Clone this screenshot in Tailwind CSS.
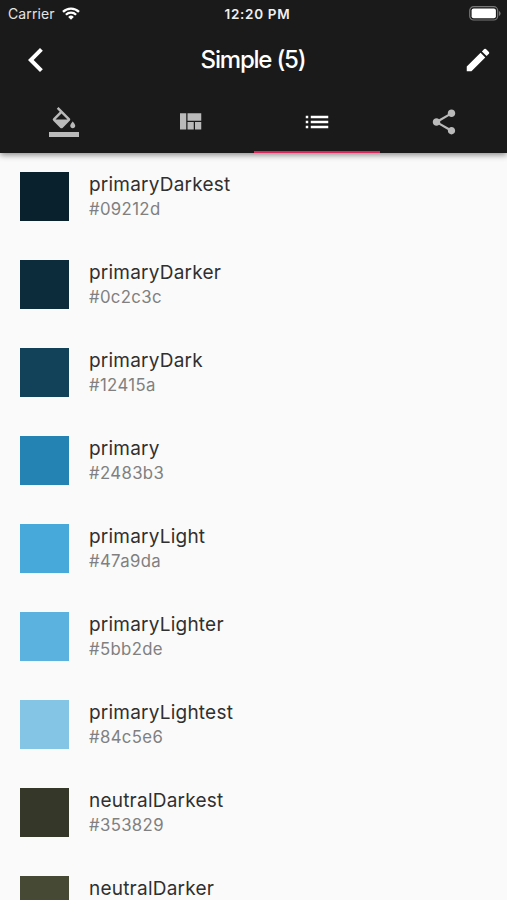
<!DOCTYPE html>
<html lang="en">
<head>
<meta charset="utf-8">
<title>Simple (5)</title>
<script src="https://cdn.jsdelivr.net/npm/@tailwindcss/browser@4"></script>
</head>
<body class="h-[900px] w-[507px] overflow-hidden bg-[#fafafa] font-['Inter',sans-serif]">
<header class="relative flex h-[152.5px] flex-col bg-[#1a1a1a] text-white shadow-[0_2px_6px_rgba(0,0,0,0.45)]">
  <div class="grid h-7 grid-cols-3 items-center pl-2 pr-[6px] text-[13.5px]">
    <div class="mb-px flex items-center gap-[7px] text-[#e4e4e4]">
      <span class="text-[14px] tracking-[0.1px]">Carrier</span>
      <svg class="h-[13px] w-[18px]" viewBox="0 0 18 13" fill="none" stroke="#fff" stroke-width="2.3"><path d="M1 4.9a11.3 11.3 0 0 1 16 0M3.9 7.8a7.2 7.2 0 0 1 10.2 0"/><path d="M9 12.7 6.2 9.9a4 4 0 0 1 5.6 0z" fill="#fff" stroke="none"/></svg>
    </div>
    <span class="whitespace-nowrap pl-[6px] text-center font-semibold tracking-[0.7px] text-[#f0f0f0]">12:20 PM</span>
    <svg class="mb-px h-[15px] w-8 justify-self-end" viewBox="0 0 32 15"><rect x=".7" y=".7" width="28" height="13.3" rx="4" fill="none" stroke="#777" stroke-width="1.2"/><rect x="2.6" y="2.5" width="24.3" height="9.7" rx="2" fill="#fff"/><path d="M30 5v5q1.6-.9 1.6-2.5T30 5z" fill="#777"/></svg>
  </div>
  <div class="flex h-16 items-center justify-between pl-3 pr-[14px]">
    <svg class="size-12" viewBox="0 0 24 24" fill="#fff"><path d="M15.41 7.41 14 6l-6 6 6 6 1.41-1.41L10.83 12z"/></svg>
    <h1 class="whitespace-nowrap pl-[1px] text-[24px] font-medium tracking-[-1.2px]">Simple (5)</h1>
    <div class="flex w-12 justify-end"><svg class="mb-px size-[30px]" viewBox="0 0 24 24" fill="#fff"><path d="M3 17.25V21h3.75L17.81 9.94l-3.75-3.75L3 17.25zM20.71 7.04a1 1 0 0 0 0-1.41l-2.34-2.34a1 1 0 0 0-1.41 0l-1.83 1.83 3.75 3.75 1.83-1.83z"/></svg></div>
  </div>
  <nav class="grid h-[60.5px] grid-cols-4 text-[#bababa]">
    <div class="flex justify-center pt-[14.5px]"><svg class="ml-[1px] size-[30px]" viewBox="0 0 24 24" fill="currentColor"><path d="M16.56 8.94 7.62 0 6.21 1.41l2.38 2.38-5.15 5.15a1.49 1.49 0 0 0 0 2.12l5.5 5.5c.29.29.68.44 1.06.44s.77-.15 1.06-.44l5.5-5.5c.59-.58.59-1.53 0-2.12zM5.21 10 10 5.21 14.79 10H5.21zM19 11.5s-2 2.17-2 3.5c0 1.1.9 2 2 2s2-.9 2-2c0-1.33-2-3.5-2-3.5z"/><path d="M0 20h24v4H0z"/></svg></div>
    <div class="flex justify-center pt-[14.5px]"><svg class="size-[30px]" viewBox="0 0 24 24" fill="currentColor"><path d="M10 18h5v-6h-5v6zm-6 0h5V5H4v13zm12 0h5v-6h-5v6zM10 5v6h11V5H10z"/></svg></div>
    <div class="flex justify-center border-b-[2.5px] border-[#d72b60] pt-[14.5px] text-white"><svg class="size-[30px]" viewBox="0 0 24 24" fill="currentColor"><path d="M3 13h2v-2H3v2zm0 4h2v-2H3v2zm0-8h2V7H3v2zm4 4h14v-2H7v2zm0 4h14v-2H7v2zM7 7v2h14V7H7z"/></svg></div>
    <div class="flex justify-center pt-[14.5px]"><svg class="size-[30px]" viewBox="0 0 24 24" fill="currentColor"><path d="M18 16.08c-.76 0-1.44.3-1.96.77L8.91 12.7c.05-.23.09-.46.09-.7s-.04-.47-.09-.7l7.05-4.11c.54.5 1.25.81 2.04.81 1.66 0 3-1.34 3-3s-1.34-3-3-3-3 1.34-3 3c0 .24.04.47.09.7L8.04 9.81C7.5 9.31 6.79 9 6 9c-1.66 0-3 1.34-3 3s1.34 3 3 3c.79 0 1.5-.31 2.04-.81l7.12 4.16c-.05.21-.08.43-.08.65 0 1.61 1.31 2.92 2.92 2.92s2.92-1.31 2.92-2.92-1.31-2.92-2.92-2.92z"/></svg></div>
  </nav>
</header>
<main class="flex flex-col gap-[39px] pl-[20.4px] pt-[19.5px] text-[#303030]">
  <div class="flex h-[49px] shrink-0 gap-[19.6px]"><div class="w-[49px] bg-[#09212d]"></div><div><div class="h-[26px] text-[19px] leading-[26px] tracking-[0.22px]">primaryDarkest</div><div class="text-[16.75px] leading-[23px] tracking-[0.35px] text-[#808080]">#09212d</div></div></div>
  <div class="flex h-[49px] shrink-0 gap-[19.6px]"><div class="w-[49px] bg-[#0c2c3c]"></div><div><div class="h-[26px] text-[19px] leading-[26px] tracking-[0.22px]">primaryDarker</div><div class="text-[16.75px] leading-[23px] tracking-[0.35px] text-[#808080]">#0c2c3c</div></div></div>
  <div class="flex h-[49px] shrink-0 gap-[19.6px]"><div class="w-[49px] bg-[#12415a]"></div><div><div class="h-[26px] text-[19px] leading-[26px] tracking-[0.22px]">primaryDark</div><div class="text-[16.75px] leading-[23px] tracking-[0.35px] text-[#808080]">#12415a</div></div></div>
  <div class="flex h-[49px] shrink-0 gap-[19.6px]"><div class="w-[49px] bg-[#2483b3]"></div><div><div class="h-[26px] text-[19px] leading-[26px] tracking-[0.22px]">primary</div><div class="text-[16.75px] leading-[23px] tracking-[0.35px] text-[#808080]">#2483b3</div></div></div>
  <div class="flex h-[49px] shrink-0 gap-[19.6px]"><div class="w-[49px] bg-[#47a9da]"></div><div><div class="h-[26px] text-[19px] leading-[26px] tracking-[0.22px]">primaryLight</div><div class="text-[16.75px] leading-[23px] tracking-[0.35px] text-[#808080]">#47a9da</div></div></div>
  <div class="flex h-[49px] shrink-0 gap-[19.6px]"><div class="w-[49px] bg-[#5bb2de]"></div><div><div class="h-[26px] text-[19px] leading-[26px] tracking-[0.22px]">primaryLighter</div><div class="text-[16.75px] leading-[23px] tracking-[0.35px] text-[#808080]">#5bb2de</div></div></div>
  <div class="flex h-[49px] shrink-0 gap-[19.6px]"><div class="w-[49px] bg-[#84c5e6]"></div><div><div class="h-[26px] text-[19px] leading-[26px] tracking-[0.22px]">primaryLightest</div><div class="text-[16.75px] leading-[23px] tracking-[0.35px] text-[#808080]">#84c5e6</div></div></div>
  <div class="flex h-[49px] shrink-0 gap-[19.6px]"><div class="w-[49px] bg-[#353829]"></div><div><div class="h-[26px] text-[19px] leading-[26px] tracking-[0.22px]">neutralDarkest</div><div class="text-[16.75px] leading-[23px] tracking-[0.35px] text-[#808080]">#353829</div></div></div>
  <div class="flex h-[49px] shrink-0 gap-[19.6px]"><div class="w-[49px] bg-[#464a34]"></div><div><div class="h-[26px] text-[19px] leading-[26px] tracking-[0.22px]">neutralDarker</div></div></div>
</main>
</body>
</html>
